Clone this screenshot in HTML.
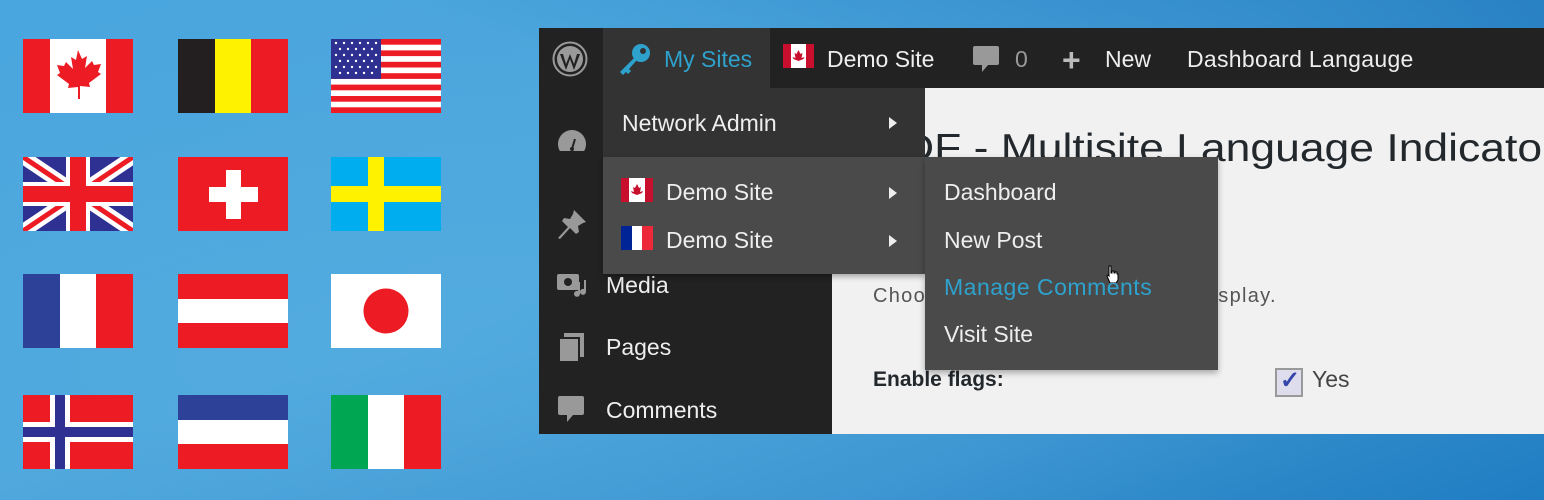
<!DOCTYPE html>
<html><head><meta charset="utf-8"><style>
*{margin:0;padding:0;box-sizing:border-box}
body{width:1544px;height:500px;overflow:hidden;position:relative;font-family:"Liberation Sans",sans-serif;
background:linear-gradient(160deg,#4aa6de 0%,#4fa7dc 45%,#3b93cf 75%,#1f7dc2 100%);}
.f{position:absolute;width:110px;height:74px}
.abs{position:absolute}
.t{position:absolute;white-space:nowrap}
</style></head><body>
<div class="abs" style="left:0;top:0;width:1544px;height:500px;background:radial-gradient(ellipse at 30% 70%,rgba(90,180,230,.35),transparent 60%),linear-gradient(200deg,rgba(0,90,170,.45),transparent 40%)"></div>

<!-- flags -->
<svg class="f" style="left:23px;top:39px" viewBox="0 0 110 74"><rect width="110" height="74" fill="#fff"/><rect width="27" height="74" fill="#ed1c24"/><rect x="83" width="27" height="74" fill="#ed1c24"/><path d="M55 11l4 9 5-3-2 12 7-7 2 4 7-1-3 8 3 2-12 9 1 4-10-1v13h-2V48l-10 1 1-4-12-9 3-2-3-8 7 1 2-4 7 7-2-12 5 3z" fill="#ed1c24"/></svg>
<svg class="f" style="left:178px;top:39px" viewBox="0 0 110 74"><rect width="37" height="74" fill="#231f20"/><rect x="37" width="36" height="74" fill="#fff200"/><rect x="73" width="37" height="74" fill="#ed1c24"/></svg>
<svg class="f" style="left:331px;top:39px" viewBox="0 0 110 74"><rect width="110" height="74" fill="#fff"/><g fill="#ed1c24"><rect y="0" width="110" height="5.7"/><rect y="11.4" width="110" height="5.7"/><rect y="22.8" width="110" height="5.7"/><rect y="34.2" width="110" height="5.7"/><rect y="45.6" width="110" height="5.7"/><rect y="57" width="110" height="5.7"/><rect y="68.3" width="110" height="5.7"/></g><rect width="50" height="39.9" fill="#2e3192"/><g fill="#fff"><circle cx="5" cy="4" r="1.2"/><circle cx="13" cy="4" r="1.2"/><circle cx="21" cy="4" r="1.2"/><circle cx="29" cy="4" r="1.2"/><circle cx="37" cy="4" r="1.2"/><circle cx="45" cy="4" r="1.2"/><circle cx="9" cy="10" r="1.2"/><circle cx="17" cy="10" r="1.2"/><circle cx="25" cy="10" r="1.2"/><circle cx="33" cy="10" r="1.2"/><circle cx="41" cy="10" r="1.2"/><circle cx="5" cy="16" r="1.2"/><circle cx="13" cy="16" r="1.2"/><circle cx="21" cy="16" r="1.2"/><circle cx="29" cy="16" r="1.2"/><circle cx="37" cy="16" r="1.2"/><circle cx="45" cy="16" r="1.2"/><circle cx="9" cy="22" r="1.2"/><circle cx="17" cy="22" r="1.2"/><circle cx="25" cy="22" r="1.2"/><circle cx="33" cy="22" r="1.2"/><circle cx="41" cy="22" r="1.2"/><circle cx="5" cy="28" r="1.2"/><circle cx="13" cy="28" r="1.2"/><circle cx="21" cy="28" r="1.2"/><circle cx="29" cy="28" r="1.2"/><circle cx="37" cy="28" r="1.2"/><circle cx="45" cy="28" r="1.2"/><circle cx="9" cy="34" r="1.2"/><circle cx="17" cy="34" r="1.2"/><circle cx="25" cy="34" r="1.2"/><circle cx="33" cy="34" r="1.2"/><circle cx="41" cy="34" r="1.2"/></g></svg>

<svg class="f" style="left:23px;top:157px" viewBox="0 0 110 74"><rect width="110" height="74" fill="#2e3192"/><path d="M0 0L110 74M110 0L0 74" stroke="#fff" stroke-width="14"/><path d="M0 0L110 74M110 0L0 74" stroke="#ed1c24" stroke-width="5"/><rect x="43" width="24" height="74" fill="#fff"/><rect y="25" width="110" height="24" fill="#fff"/><rect x="47" width="16" height="74" fill="#ed1c24"/><rect y="29" width="110" height="16" fill="#ed1c24"/></svg>
<svg class="f" style="left:178px;top:157px" viewBox="0 0 110 74"><rect width="110" height="74" fill="#ed1c24"/><rect x="48" y="13" width="15" height="49" fill="#fff"/><rect x="31" y="30" width="49" height="15" fill="#fff"/></svg>
<svg class="f" style="left:331px;top:157px" viewBox="0 0 110 74"><rect width="110" height="74" fill="#00aeef"/><rect x="37" width="16" height="74" fill="#fff200"/><rect y="29" width="110" height="16" fill="#fff200"/></svg>

<svg class="f" style="left:23px;top:274px" viewBox="0 0 110 74"><rect width="37" height="74" fill="#2e4198"/><rect x="37" width="36" height="74" fill="#fff"/><rect x="73" width="37" height="74" fill="#ed1c24"/></svg>
<svg class="f" style="left:178px;top:274px" viewBox="0 0 110 74"><rect width="110" height="74" fill="#ed1c24"/><rect y="25" width="110" height="24" fill="#fff"/></svg>
<svg class="f" style="left:331px;top:274px" viewBox="0 0 110 74"><rect width="110" height="74" fill="#fff"/><circle cx="55" cy="37" r="22.5" fill="#ed1c24"/></svg>

<svg class="f" style="left:23px;top:395px" viewBox="0 0 110 74"><rect width="110" height="74" fill="#ed1c24"/><rect x="27" width="20" height="74" fill="#fff"/><rect y="27" width="110" height="20" fill="#fff"/><rect x="32" width="10" height="74" fill="#2e3192"/><rect y="32" width="110" height="10" fill="#2e3192"/></svg>
<svg class="f" style="left:178px;top:395px" viewBox="0 0 110 74"><rect width="110" height="25" fill="#2e4198"/><rect y="25" width="110" height="24" fill="#fff"/><rect y="49" width="110" height="25" fill="#ed1c24"/></svg>
<svg class="f" style="left:331px;top:395px" viewBox="0 0 110 74"><rect width="37" height="74" fill="#00a651"/><rect x="37" width="36" height="74" fill="#fff"/><rect x="73" width="37" height="74" fill="#ed1c24"/></svg>

<!-- window -->
<div class="abs" style="left:539px;top:28px;width:1005px;height:406px;background:#f1f1f1;overflow:hidden">
<div class="t" style="left:363px;top:99px;font-size:39px;color:#23282d;transform:scaleX(1.14);transform-origin:0 0">DF - Multisite Language Indicator</div>
</div>
<div class="abs" style="left:539px;top:28px;width:1005px;height:60px;background:#222"></div>
<div class="abs" style="left:539px;top:88px;width:293px;height:346px;background:#222"></div>
<!-- wp logo -->
<svg class="abs" style="left:552px;top:41px" width="36" height="36" viewBox="0 0 36 36"><circle cx="18" cy="18" r="16.5" fill="none" stroke="#9a9a9a" stroke-width="2"/><circle cx="18" cy="18" r="13" fill="#9a9a9a"/><path d="M8 13l6 16 4-11 4 11 6-16h-3l-3 10-4-10-4 10-3-10z" fill="#222"/></svg>
<!-- my sites -->
<div class="abs" style="left:603px;top:28px;width:167px;height:60px;background:#333"></div>
<svg class="abs" style="left:617px;top:42px" width="36" height="34" viewBox="0 0 36 34"><circle cx="24" cy="11" r="9" fill="#2ea2cc"/><circle cx="26" cy="9" r="3" fill="#333"/><path d="M18 15L3 30l3 3 3-3 2 2 3-3-2-2 8-9z" fill="#2ea2cc"/></svg>
<div class="t" style="left:664px;top:46px;font-size:23px;color:#2ea2cc">My Sites</div>
<svg class="abs" style="left:783px;top:44px" width="31" height="24" viewBox="0 0 31 24"><rect width="31" height="24" fill="#fff"/><rect width="8" height="24" fill="#c8102e"/><rect x="23" width="8" height="24" fill="#c8102e"/><path d="M15.5 6l2 4 2-1-1 5 3-1-1 2-5 2-5-2-1-2 3 1-1-5 2 1z" fill="#c8102e"/></svg>
<div class="t" style="left:827px;top:46px;font-size:23px;color:#eee">Demo Site</div>
<svg class="abs" style="left:973px;top:46px" width="26" height="28" viewBox="0 0 26 28"><path d="M2 0h22a2 2 0 012 2v15a2 2 0 01-2 2H15l-6 7v-7H2a2 2 0 01-2-2V2a2 2 0 012-2z" fill="#999"/></svg>
<div class="t" style="left:1015px;top:46px;font-size:23px;color:#999">0</div>
<div class="t" style="left:1062px;top:42px;font-size:32px;color:#bbb;font-weight:bold">+</div>
<div class="t" style="left:1105px;top:46px;font-size:23px;color:#eee">New</div>
<div class="t" style="left:1187px;top:46px;font-size:23px;color:#eee;letter-spacing:0.3px">Dashboard Langauge</div>

<!-- sidebar -->
<svg class="abs" style="left:557px;top:128px" width="30" height="26" viewBox="0 0 30 26"><path d="M15 2A14 14 0 001 16c0 3 1 6 2 7h24c1-1 2-4 2-7A14 14 0 0015 2z" fill="#999"/><path d="M15 21l3-10" stroke="#222" stroke-width="2"/><circle cx="15" cy="21" r="2" fill="#222"/></svg>
<svg class="abs" style="left:556px;top:208px" width="32" height="32" viewBox="0 0 32 32"><path d="M18 2l12 12-3 1-5 3 1 6-3 2-6-6-10 11-2-1 10-11-6-6 2-3 6 1 3-5z" fill="#999"/></svg>
<svg class="abs" style="left:556px;top:268px" width="32" height="32" viewBox="0 0 32 32"><rect x="1" y="6" width="22" height="16" rx="2" fill="#999"/><circle cx="12" cy="14" r="4" fill="#222"/><path d="M24 14v12a3 3 0 11-2-3v-9z M30 12v12a3 3 0 11-2-3v-9z" fill="#999"/></svg>
<svg class="abs" style="left:558px;top:333px" width="28" height="30" viewBox="0 0 28 30"><rect x="6" y="0" width="20" height="24" fill="#999"/><rect x="1" y="5" width="20" height="24" fill="#999" stroke="#222" stroke-width="2"/></svg>
<svg class="abs" style="left:558px;top:396px" width="26" height="28" viewBox="0 0 26 28"><path d="M2 0h22a2 2 0 012 2v15a2 2 0 01-2 2H15l-6 7v-7H2a2 2 0 01-2-2V2a2 2 0 012-2z" fill="#999"/></svg>
<div class="t" style="left:606px;top:272px;font-size:23px;color:#eee">Media</div>
<div class="t" style="left:606px;top:334px;font-size:23px;color:#eee">Pages</div>
<div class="t" style="left:606px;top:397px;font-size:23px;color:#eee">Comments</div>

<!-- content -->
<div class="t" style="left:873px;top:285px;font-size:20px;color:#555;letter-spacing:1.3px">Choose which flags you want to display.</div>
<div class="t" style="left:873px;top:368px;font-size:21px;color:#23282d;font-weight:bold">Enable flags:</div>
<div class="abs" style="left:1275px;top:368px;width:28px;height:29px;border:2px solid #999;background:#dde"></div>
<div class="t" style="left:1280px;top:366px;font-size:24px;color:#3344aa;font-weight:bold">✓</div>
<div class="t" style="left:1312px;top:366px;font-size:23px;color:#444">Yes</div>

<!-- dropdown -->
<div class="abs" style="left:603px;top:88px;width:322px;height:69px;background:#333"></div>
<div class="abs" style="left:603px;top:157px;width:322px;height:117px;background:#4a4a4a;box-shadow:0 3px 5px rgba(0,0,0,.3)"></div>
<div class="t" style="left:622px;top:110px;font-size:23px;color:#eee">Network Admin</div>
<svg class="abs" style="left:888px;top:116px" width="10" height="14"><path d="M1 1l8 6-8 6z" fill="#eee"/></svg>
<svg class="abs" style="left:621px;top:178px" width="32" height="24" viewBox="0 0 32 24"><rect width="32" height="24" fill="#fff"/><rect width="8" height="24" fill="#c8102e"/><rect x="24" width="8" height="24" fill="#c8102e"/><path d="M16 6l2 4 2-1-1 5 3-1-1 2-5 2-5-2-1-2 3 1-1-5 2 1z" fill="#c8102e"/></svg>
<div class="t" style="left:666px;top:179px;font-size:23px;color:#eee">Demo Site</div>
<svg class="abs" style="left:888px;top:186px" width="10" height="14"><path d="M1 1l8 6-8 6z" fill="#eee"/></svg>
<svg class="abs" style="left:621px;top:226px" width="32" height="24" viewBox="0 0 32 24"><rect width="11" height="24" fill="#002395"/><rect x="11" width="10" height="24" fill="#fff"/><rect x="21" width="11" height="24" fill="#ed2939"/></svg>
<div class="t" style="left:666px;top:227px;font-size:23px;color:#eee">Demo Site</div>
<svg class="abs" style="left:888px;top:234px" width="10" height="14"><path d="M1 1l8 6-8 6z" fill="#eee"/></svg>

<!-- submenu -->
<div class="abs" style="left:925px;top:157px;width:293px;height:213px;background:#4a4a4a;box-shadow:0 3px 6px rgba(0,0,0,.3)"></div>
<div class="t" style="left:944px;top:179px;font-size:23px;color:#eee">Dashboard</div>
<div class="t" style="left:944px;top:227px;font-size:23px;color:#eee">New Post</div>
<div class="t" style="left:944px;top:274px;font-size:23px;color:#2ea2cc;letter-spacing:0.5px">Manage Comments</div>
<div class="t" style="left:944px;top:321px;font-size:23px;color:#eee">Visit Site</div>
<svg class="abs" style="left:1106px;top:265px" width="14" height="18" viewBox="0 0 14 18"><path d="M3 1h2v7h1V6h2v2h1V7h2v2h1v6l-2 3H4L1 11l1-1 1 1z" fill="#fff" stroke="#000" stroke-width="1"/></svg>
</body></html>
